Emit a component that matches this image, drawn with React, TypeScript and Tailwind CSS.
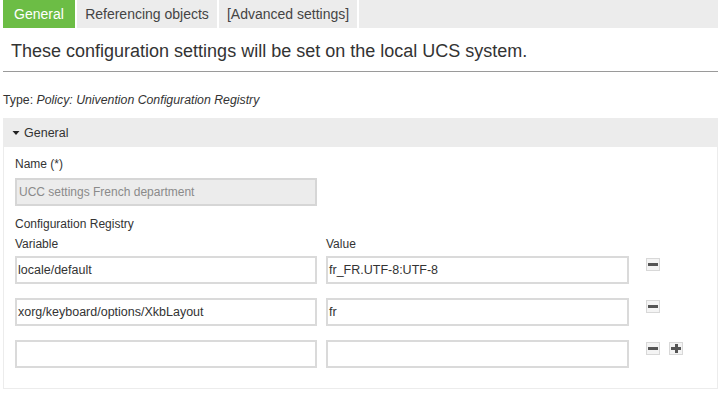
import React from 'react';

const rows = [
   { variable: 'locale/default', value: 'fr_FR.UTF-8:UTF-8' },
   { variable: 'xorg/keyboard/options/XkbLayout', value: 'fr' },
   { variable: '', value: '' },
];

const MinusButton = () => (
   <button className="w-[14px] h-[13px] border border-[#d8d8d8] bg-[#f4f4f4] flex items-center justify-center">
      <span className="block w-[10px] h-[3px] bg-[#555]" />
   </button>
);

const PlusButton = () => (
   <button className="relative w-[14px] h-[13px] border border-[#d8d8d8] bg-[#f4f4f4] flex items-center justify-center">
      <span className="block w-[10px] h-[3px] bg-[#555]" />
      <span className="absolute left-[5px] top-[1px] block w-[3px] h-[9px] bg-[#555]" />
   </button>
);

export default function App() {
   return (
      <div className="w-[718px] h-[400px] bg-white text-[#333] font-['Liberation_Sans',Arial,sans-serif] overflow-hidden">
         <div className="ml-[3px] flex h-[28px] bg-[#ececec] text-[14px]">
            <div className="w-[74px] bg-[#6cbd45] text-white flex items-center justify-center border-r-2 border-white">
               General
            </div>
            <div className="w-[142px] flex items-center justify-center text-[#444] border-r-2 border-white">
               Referencing objects
            </div>
            <div className="w-[140px] flex items-center justify-center text-[#444] border-r-2 border-white">
               [Advanced settings]
            </div>
         </div>

         <div className="ml-[3px] h-[44px] border-b border-[#9a9a9a] flex items-end pb-[11px] pl-[8px]">
            <h1 className="text-[18px] leading-none">
               These configuration settings will be set on the local UCS system.
            </h1>
         </div>

         <div className="ml-[3px] mt-[22px] text-[12.3px] leading-none">
            Type: <i>Policy: Univention Configuration Registry</i>
         </div>

         <div className="ml-[3px] mt-[12px] border border-[#ececec] h-[271px]">
            <div className="h-[28px] bg-[#ececec] flex items-center pl-[8px] text-[12.5px] gap-[4px]">
               <svg width="8" height="6" viewBox="0 0 8 6">
                  <path d="M0.5 1 L7.5 1 L4 5 Z" fill="#222" />
               </svg>
               General
            </div>
            <div className="pl-[11px] pt-[11px] text-[12px]">
               <div className="leading-none h-[12px]">Name (*)</div>
               <div className="mt-[8px] w-[302px] h-[28px] bg-[#ececec] border-2 border-[#d6d6d6] flex items-center px-[2px] text-[#8a8a8a]">
                  UCC settings French department
               </div>
               <div className="mt-[12px] leading-none h-[12px]">Configuration Registry</div>
               <div className="mt-[8px] flex leading-none h-[12px]">
                  <div className="w-[311px]">Variable</div>
                  <div>Value</div>
               </div>
               <div className="mt-[6px] flex flex-col gap-[14px]">
                  {rows.map((row, i) => (
                     <div key={i} className="flex items-start">
                        <div className="w-[302px] h-[28px] border-2 border-[#dadada] flex items-center px-[1px] text-[12.5px]">
                           {row.variable}
                        </div>
                        <div className="ml-[9px] w-[303px] h-[28px] border-2 border-[#dadada] flex items-center px-[1px] text-[12.5px]">
                           {row.value}
                        </div>
                        <div className="ml-[17px] mt-[2px] flex gap-[9px]">
                           <MinusButton />
                           {i === rows.length - 1 && <PlusButton />}
                        </div>
                     </div>
                  ))}
               </div>
            </div>
         </div>
      </div>
   );
}
